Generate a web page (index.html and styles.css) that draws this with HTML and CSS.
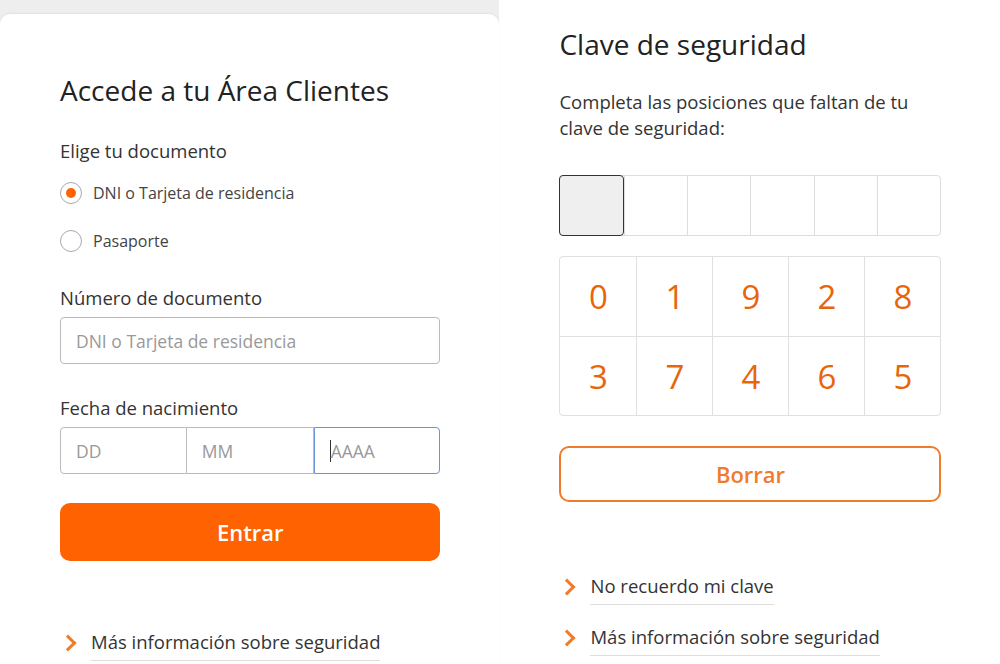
FILE: index.html
```html
<!DOCTYPE html>
<html lang="es">
<head>
  <meta charset="UTF-8">
  <meta name="viewport" content="width=device-width, initial-scale=1.0">
  <title>Área Clientes</title>
  <link rel="stylesheet" href="styles.css">
</head>
<body>
  <!-- Login panel -->
  <div class="left-panel">
    <div class="card">
      <h1>Accede a tu Área Clientes</h1>

      <p class="label">Elige tu documento</p>
      <div class="radio-row">
        <span class="radio checked"></span>
        <span>DNI o Tarjeta de residencia</span>
      </div>
      <div class="radio-row">
        <span class="radio"></span>
        <span>Pasaporte</span>
      </div>

      <p class="label label-doc">Número de documento</p>
      <div class="field">DNI o Tarjeta de residencia</div>

      <p class="label label-date">Fecha de nacimiento</p>
      <div class="date-row">
        <div class="date-cell">DD</div>
        <div class="date-cell">MM</div>
        <div class="date-cell focus"><span class="caret"></span>AAAA</div>
      </div>

      <button class="btn-primary">Entrar</button>

      <div class="links links-left">
        <a class="link-item">Más información sobre seguridad</a>
      </div>
    </div>
  </div>

  <!-- Security key panel -->
  <div class="right-panel">
    <h1 class="title-right">Clave de seguridad</h1>
    <p class="intro">Completa las posiciones que faltan de tu<br>clave de seguridad:</p>

    <div class="key-row">
      <div class="key-cell active"></div>
      <div class="key-cell"></div>
      <div class="key-cell"></div>
      <div class="key-cell"></div>
      <div class="key-cell"></div>
      <div class="key-cell"></div>
    </div>

    <div class="keypad" id="keypad"></div>

    <button class="btn-outline">Borrar</button>

    <div class="links links-right">
      <a class="link-item">No recuerdo mi clave</a>
      <a class="link-item">Más información sobre seguridad</a>
    </div>
  </div>

  <script>
    const digits = [0, 1, 9, 2, 8, 3, 7, 4, 6, 5];
    const keypad = document.getElementById('keypad');
    digits.forEach(d => {
      const key = document.createElement('div');
      key.classList.add('key');
      key.textContent = d;
      keypad.appendChild(key);
    });
  </script>
</body>
</html>
```

FILE: styles.css
```css
body {
  margin: 0;
  display: flex;
  font-family: "Open Sans", sans-serif;
  color: #333;
  background-color: #fff;
  height: 664px;
  overflow: hidden;
}

h1 {
  font-weight: 400;
  font-size: 28px;
  color: #222;
  margin: 0;
}

.left-panel {
  width: 500px;
  height: 664px;
  box-sizing: border-box;
  background-color: #eee;
  padding-top: 14px;
}

.card {
  background-color: #fff;
  border-radius: 10px 10px 0 0;
  box-shadow: 0 -1px 2px rgba(0, 0, 0, 0.06);
  height: 650px;
  box-sizing: border-box;
  padding: 57px 59px 0 60px;
}

.label {
  font-size: 18.5px;
  margin: 0;
  color: #333;
}

.card h1 {
  margin-bottom: 29px;
}

.radio-row {
  display: flex;
  align-items: center;
  gap: 11px;
  font-size: 16px;
  color: #444;
  height: 24px;
  margin-top: 18px;
}

.radio-row + .radio-row {
  margin-top: 24px;
}

.radio {
  width: 22px;
  height: 22px;
  box-sizing: border-box;
  border: 1px solid #aaa;
  border-radius: 50%;
  display: flex;
  align-items: center;
  justify-content: center;
}

.radio.checked::after {
  content: '';
  width: 10px;
  height: 10px;
  border-radius: 50%;
  background-color: #ff6200;
}

.label-doc {
  margin-top: 32px;
}

.field {
  margin-top: 7px;
  height: 47px;
  box-sizing: border-box;
  border: 1px solid #bbb;
  border-radius: 4px;
  padding: 0 15px;
  display: flex;
  align-items: center;
  font-size: 17.5px;
  color: #999;
}

.label-date {
  margin-top: 31px;
}

.date-row {
  margin-top: 7px;
  display: grid;
  grid-template-columns: repeat(3, 1fr);
  height: 47px;
}

.date-cell {
  box-sizing: border-box;
  border: 1px solid #bbb;
  display: flex;
  align-items: center;
  padding: 0 15px;
  font-size: 17.5px;
  color: #999;
}

.date-cell:first-child {
  border-radius: 4px 0 0 4px;
}

.date-cell + .date-cell {
  border-left: none;
}

.date-cell.focus {
  border: 1.5px solid #6d95d6;
  border-radius: 0 4px 4px 0;
  padding-left: 15px;
}

.caret {
  width: 1px;
  height: 22px;
  background-color: #333;
}

.btn-primary {
  display: block;
  width: 100%;
  height: 58px;
  margin-top: 29px;
  border: none;
  border-radius: 10px;
  background-color: #ff6200;
  color: #fff;
  font-family: inherit;
  font-size: 22px;
  font-weight: 600;
}

.links {
  display: flex;
  flex-direction: column;
  align-items: flex-start;
}

.links-left {
  margin-top: 68px;
}

.link-item {
  position: relative;
  margin-left: 31px;
  padding-bottom: 6px;
  border-bottom: 1px solid #ddd;
  font-size: 18.5px;
  color: #333;
}

.link-item::before {
  content: '';
  position: absolute;
  left: -29px;
  top: 8px;
  width: 9px;
  height: 9px;
  border-top: 3px solid #f07b2b;
  border-right: 3px solid #f07b2b;
  transform: rotate(45deg);
}

.right-panel {
  width: 441px;
  padding: 25px 0 0 60px;
}

.intro {
  margin: 26px 0 0;
  font-size: 18.5px;
  line-height: 26px;
  color: #333;
}

.key-row {
  margin-top: 34px;
  width: 382px;
  height: 61px;
  display: grid;
  grid-template-columns: repeat(6, 1fr);
  border: 1px solid #ddd;
  border-radius: 4px;
  box-sizing: border-box;
}

.key-cell + .key-cell {
  border-left: 1px solid #ddd;
}

.key-cell.active {
  margin: -1px 0 -1px -1px;
  border: 1px solid #333;
  border-radius: 4px;
  background-color: #efefef;
}

.keypad {
  margin-top: 20px;
  width: 382px;
  box-sizing: border-box;
  display: grid;
  grid-template-columns: repeat(5, 1fr);
  grid-template-rows: repeat(2, 79px);
  border: 1px solid #e0e0e0;
  border-radius: 4px;
}

.key {
  display: flex;
  align-items: center;
  justify-content: center;
  font-size: 33px;
  font-weight: 400;
  color: #e8650a;
  border-left: 1px solid #e0e0e0;
  border-top: 1px solid #e0e0e0;
}

.key:nth-child(5n + 1) {
  border-left: none;
}

.key:nth-child(-n + 5) {
  border-top: none;
}

.btn-outline {
  display: block;
  width: 382px;
  height: 56px;
  margin-top: 30px;
  border: 2px solid #f07b2b;
  border-radius: 10px;
  background-color: #fff;
  color: #f07b2b;
  font-family: inherit;
  font-size: 22px;
  font-weight: 600;
}

.links-right {
  margin-top: 71px;
  gap: 19px;
}
```
